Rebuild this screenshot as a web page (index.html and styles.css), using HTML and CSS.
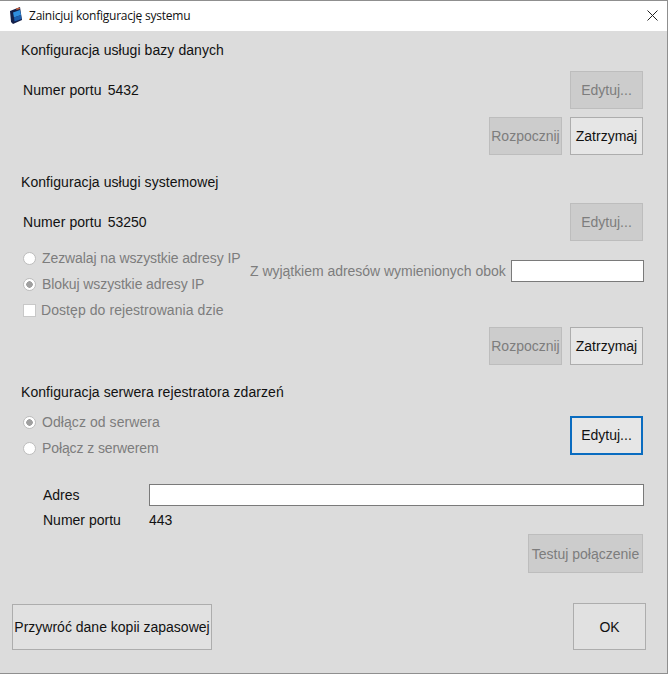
FILE: index.html
```html
<!DOCTYPE html>
<html lang="pl">
<head>
    <meta charset="UTF-8">
    <title>Zainicjuj konfigurację systemu</title>
    <link rel="stylesheet" href="styles.css">
</head>
<body>
    <div class="window">
        <div class="titlebar">
            <svg class="app-icon" width="13" height="17" viewBox="0 0 13 17">
                <path d="M0 4 L10 0 L12 13 L3 17 L1 15 Z" fill="#14204a"/>
                <path d="M3 5.500 L10 3 L11 8 L4 10.500 Z" fill="#2f8fe0"/>
                <path d="M4 10.500 L11 8 L11.500 12 L4.500 14.500 Z" fill="#1c5fb0"/>
                <path d="M6 1.500 L9.500 .5 L10 2 L6.500 3 Z" fill="#c9603a"/>
            </svg>
            <span class="title">Zainicjuj konfigurację systemu</span>
            <svg class="close" width="11" height="11" viewBox="0 0 11 11">
                <path d="M.5 .5 L10.500 10.500 M10.500 .5 L.5 10.500" stroke="#222" fill="none"/>
            </svg>
        </div>

        <div class="content">
            <section class="db">
                <h2>Konfiguracja usługi bazy danych</h2>
                <div class="port-row">
                    <span class="port">Numer portu</span>
                    <span>5432</span>
                    <button class="btn off push">Edytuj...</button>
                </div>
                <div class="actions">
                    <button class="btn off">Rozpocznij</button>
                    <button class="btn">Zatrzymaj</button>
                </div>
            </section>

            <section class="sys">
                <h2>Konfiguracja usługi systemowej</h2>
                <div class="port-row">
                    <span class="port">Numer portu</span>
                    <span>53250</span>
                    <button class="btn off push">Edytuj...</button>
                </div>
                <div class="ip-box">
                    <div class="ip-options">
                        <label class="opt tight"><i class="radio"></i>Zezwalaj na wszystkie adresy IP</label>
                        <label class="opt tight"><i class="radio on"></i>Blokuj wszystkie adresy IP</label>
                        <label class="opt wide-text"><i class="check"></i>Dostęp do rejestrowania dzie</label>
                    </div>
                    <div class="except">
                        <span>Z wyjątkiem adresów wymienionych obok</span>
                        <div class="field"></div>
                    </div>
                </div>
                <div class="actions">
                    <button class="btn off">Rozpocznij</button>
                    <button class="btn">Zatrzymaj</button>
                </div>
            </section>

            <section class="log">
                <h2>Konfiguracja serwera rejestratora zdarzeń</h2>
                <div class="server-row">
                    <div class="server-options">
                        <label class="opt wide-text"><i class="radio on"></i>Odłącz od serwera</label>
                        <label class="opt tight"><i class="radio"></i>Połącz z serwerem</label>
                    </div>
                    <button class="btn focus push">Edytuj...</button>
                </div>
                <div class="addr-row">
                    <span class="addr-label">Adres</span>
                    <div class="field wide"></div>
                </div>
                <div class="addr-row port2">
                    <span class="addr-label">Numer portu</span>
                    <span>443</span>
                </div>
                <div class="test-row">
                    <button class="btn off test">Testuj połączenie</button>
                </div>
            </section>

            <div class="footer">
                <button class="btn big restore">Przywróć dane kopii zapasowej</button>
                <button class="btn big ok">OK</button>
            </div>
        </div>
    </div>
</body>
</html>
```

FILE: styles.css
```css
:root {
    --panel: #dcdcdc;
    --edge: #adadad;
    --muted: #7d7d7d;
}
* {
    box-sizing: border-box;
}
html, body {
    margin: 0;
    height: 100%;
    background: #fff;
}
body {
    font-family: "Liberation Sans", Arial, sans-serif;
    font-size: 14px;
    color: #111;
}
.window {
    width: 668px;
    height: 674px;
    display: flex;
    flex-direction: column;
    border-top: 1px solid #8f8f8f;
    border-right: 1px solid #8f8f8f;
    border-bottom: 1px solid #8f8f8f;
    background: var(--panel);
}
.titlebar {
    height: 30px;
    flex: none;
    display: flex;
    align-items: center;
    background: #fff;
    padding: 0 9px 1px 10px;
}
.app-icon {
    margin-right: 6px;
}
.title {
    font-family: "Open Sans", sans-serif;
    font-size: 12px;
    letter-spacing: -0.23px;
}
.close {
    margin-left: auto;
}
.content {
    flex: 1;
    padding: 0 24px 0 12px;
    display: flex;
    flex-direction: column;
}
section h2 {
    margin: 0;
    font-size: 14px;
    font-weight: normal;
    line-height: 16px;
    padding-left: 9px;
    letter-spacing: 0.07px;
}
.db {
    padding-top: 11px;
}
.sys {
    padding-top: 19px;
}
.log {
    padding-top: 19px;
}
.port-row {
    display: flex;
    align-items: center;
    padding-left: 11px;
    margin-top: 13px;
}
.port {
    margin-right: 6px;
    letter-spacing: 0.08px;
}
.push {
    margin-left: auto;
}
.btn {
    width: 73px;
    height: 38px;
    padding: 0;
    font: inherit;
    color: #111;
    background: #e6e6e6;
    border: 1px solid var(--edge);
    white-space: nowrap;
}
.btn.off {
    background: #cccccc;
    border-color: #bdbdbd;
    color: var(--muted);
}
.btn.focus {
    height: 39px;
    background: #e6e6e6;
    border: 2px solid #0a6cc0;
}
.actions {
    display: flex;
    justify-content: flex-end;
    gap: 8px;
    margin-top: 8px;
}
.sys .actions {
    margin-top: 4px;
}
.ip-box {
    display: flex;
    align-items: flex-start;
    margin-top: 4px;
    padding-left: 11px;
    color: var(--muted);
}
.ip-options {
    width: 227px;
    flex: none;
}
.opt {
    display: flex;
    align-items: center;
    height: 26px;
}
.tight {
    letter-spacing: -0.1px;
}
.wide-text {
    letter-spacing: 0.07px;
}
.radio {
    width: 13px;
    height: 13px;
    margin-right: 6px;
    border-radius: 50%;
    border: 1px solid #bdbdbd;
    background: #fff;
    flex: none;
}
.radio.on {
    background: radial-gradient(circle, #a0a0a0 0 3px, #fff 3.5px);
}
.check {
    width: 13px;
    height: 13px;
    margin-right: 5px;
    border: 1px solid #c8c8c8;
    background: #fff;
    flex: none;
}
.except {
    flex: 1;
    height: 52px;
    display: flex;
    align-items: center;
    justify-content: space-between;
    margin-right: -1px;
    letter-spacing: -0.03px;
}
.field {
    height: 22px;
    width: 133px;
    background: #fff;
    border: 1px solid #7a7a7a;
}
.field.wide {
    flex: 1;
    width: auto;
}
.server-row {
    display: flex;
    align-items: center;
    padding-left: 11px;
    margin-top: 9px;
    color: var(--muted);
}
.addr-row {
    display: flex;
    align-items: center;
    padding-left: 31px;
    margin-right: -1px;
    margin-top: 23px;
}
.addr-label {
    width: 106px;
    flex: none;
}
.port2 {
    margin-top: 2px;
    height: 24px;
}
.test-row {
    display: flex;
    justify-content: flex-end;
    margin-top: 2px;
}
.btn.test {
    width: 115px;
    height: 39px;
}
.footer {
    display: flex;
    justify-content: space-between;
    align-items: flex-end;
    margin-top: 30px;
    margin-right: -3px;
}
.btn.big {
    height: 46px;
    background: #e1e1e1;
}
.restore {
    width: 200px;
}
.btn.ok {
    width: 73px;
    height: 47px;
}
```
